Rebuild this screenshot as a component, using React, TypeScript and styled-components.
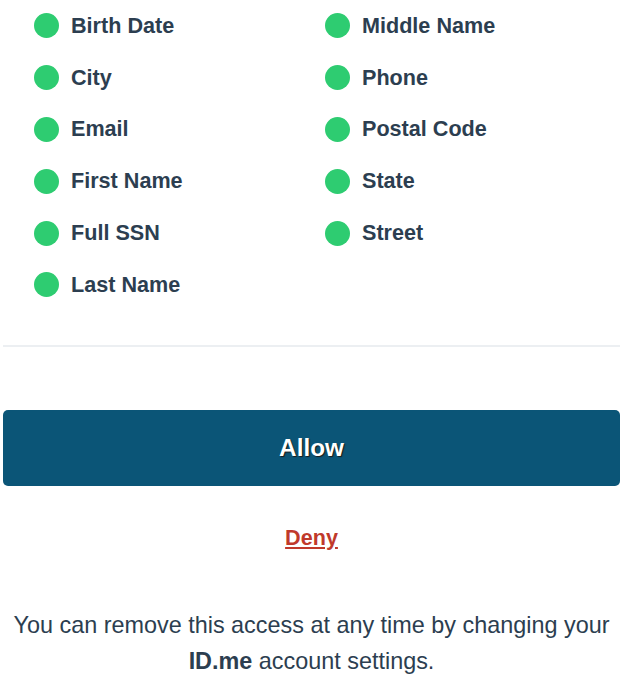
import React from "react";
import styled, { createGlobalStyle } from "styled-components";

const Global = createGlobalStyle`
  html, body { margin: 0; padding: 0; background: #ffffff; }
  body { font-family: "Liberation Sans", Arial, sans-serif; color: #2c3e50; }
`;

const Page = styled.div`
  width: 617px;
  margin-left: 3px;
  display: flex;
  flex-direction: column;
`;

const List = styled.ul`
  list-style: none;
  margin: 0;
  padding: 0 0 0 31px;
  display: grid;
  grid-template-columns: 291px 1fr;
  grid-auto-rows: 51.8px;
  grid-auto-flow: column;
  grid-template-rows: repeat(6, 51.8px);
`;

const Item = styled.li`
  display: flex;
  align-items: center;
  gap: 12px;
  font-size: 21.6px;
  font-weight: 700;
  color: #2c3e50;
`;

const Dot = styled.span`
  width: 25px;
  height: 25px;
  border-radius: 50%;
  background: #2ecc71;
  flex: none;
`;

const Divider = styled.hr`
  border: none;
  height: 2px;
  background: #eceff2;
  margin: 34px 0 0;
`;

const AllowButton = styled.button`
  margin-top: 63px;
  height: 76px;
  width: 100%;
  border: none;
  border-radius: 5px;
  background: #0b5577;
  color: #ffffff;
  font-family: "Liberation Sans", Arial, sans-serif;
  font-size: 24.3px;
  font-weight: 700;
  text-shadow: 1px 1px 1px #1a1a1a;
  cursor: pointer;
`;

const DenyLink = styled.a`
  margin-top: 37px;
  align-self: center;
  line-height: 30px;
  font-size: 21.6px;
  font-weight: 700;
  color: #c0392b;
  text-decoration: underline;
  text-underline-offset: 2px;
  cursor: pointer;
`;

const Note = styled.p`
  margin: 54px 0 0;
  text-align: center;
  font-size: 23.4px;
  line-height: 36px;
  color: #2c3e50;
`;

const left = ["Birth Date", "City", "Email", "First Name", "Full SSN", "Last Name"];
const right = ["Middle Name", "Phone", "Postal Code", "State", "Street"];

export default function App() {
  return (
    <>
      <Global />
      <Page>
        <List>
          {[...left, ...right].map((name) => (
            <Item key={name}>
              <Dot />
              {name}
            </Item>
          ))}
        </List>
        <Divider />
        <AllowButton>Allow</AllowButton>
        <DenyLink>Deny</DenyLink>
        <Note>
          You can remove this access at any time by changing your <b>ID.me</b> account settings.
        </Note>
      </Page>
    </>
  );
}
